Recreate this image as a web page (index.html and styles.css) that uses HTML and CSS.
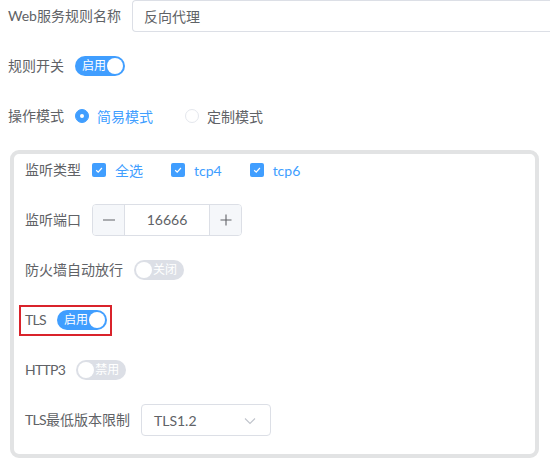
FILE: index.html
```html
<!DOCTYPE html>
<html lang="zh-CN">
<head>
<meta charset="utf-8">
<link rel="stylesheet" href="styles.css">
</head>
<body>
<div class="form">
  <div class="row">
    <span class="label">Web服务规则名称</span>
    <div class="input"><span>反向代理</span></div>
  </div>
  <div class="row">
    <span class="label">规则开关</span>
    <span class="switch on"><span class="sw-text">启用</span><span class="knob"></span></span>
  </div>
  <div class="row">
    <span class="label">操作模式</span>
    <span class="radio checked"><span class="dot"></span><span class="rtext">简易模式</span></span>
    <span class="radio"><span class="dot"></span><span class="rtext">定制模式</span></span>
  </div>
  <div class="card">
    <div class="row">
      <span class="label">监听类型</span>
      <span class="check"><span class="box"><svg width="10" height="10" viewBox="0 0 10 10"><path d="M2.2 5.2 L4.2 7.1 L7.9 3" fill="none" stroke="#fff" stroke-width="1.2"/></svg></span><span class="ctext">全选</span></span>
      <span class="check"><span class="box"><svg width="10" height="10" viewBox="0 0 10 10"><path d="M2.2 5.2 L4.2 7.1 L7.9 3" fill="none" stroke="#fff" stroke-width="1.2"/></svg></span><span class="ctext">tcp4</span></span>
      <span class="check"><span class="box"><svg width="10" height="10" viewBox="0 0 10 10"><path d="M2.2 5.2 L4.2 7.1 L7.9 3" fill="none" stroke="#fff" stroke-width="1.2"/></svg></span><span class="ctext">tcp6</span></span>
    </div>
    <div class="row">
      <span class="label">监听端口</span>
      <div class="number">
        <span class="nbtn minus"><svg width="14" height="14" viewBox="0 0 14 14"><path d="M1 7 H13" stroke="#606266" stroke-width="1.1"/></svg></span>
        <span class="nval">16666</span>
        <span class="nbtn plus"><svg width="14" height="14" viewBox="0 0 14 14"><path d="M1.5 7 H12.5 M7 1.5 V12.5" stroke="#606266" stroke-width="1.1"/></svg></span>
      </div>
    </div>
    <div class="row">
      <span class="label">防火墙自动放行</span>
      <span class="switch off"><span class="knob"></span><span class="sw-text">关闭</span></span>
    </div>
    <div class="row">
      <div class="highlight">
        <span class="label"><span class="latin">TLS</span></span>
        <span class="switch on"><span class="sw-text">启用</span><span class="knob"></span></span>
      </div>
    </div>
    <div class="row">
      <span class="label"><span class="latin">HTTP3</span></span>
      <span class="switch off"><span class="knob"></span><span class="sw-text">禁用</span></span>
    </div>
    <div class="row">
      <span class="label"><span class="latin">TLS</span>最低版本限制</span>
      <div class="select">
        <span>TLS1.2</span>
        <svg class="chev" width="12" height="8" viewBox="0 0 12 8"><path d="M1 1.5 L6 6.5 L11 1.5" fill="none" stroke="#c0c4cc" stroke-width="1.1"/></svg>
      </div>
    </div>
  </div>
</div>
</body>
</html>
```
FILE: styles.css
```css
* { box-sizing: border-box; }
html, body { margin: 0; padding: 0; background: #fff; }
body {
  font-family: Lato, "Noto Sans CJK SC", sans-serif;
  font-size: 14px;
  color: #606266;
  width: 550px;
  height: 468px;
  overflow: hidden;
}
.form { padding: 0 0 0 8px; }
.row {
  display: flex;
  align-items: center;
  height: 32px;
  margin-bottom: 18px;
  white-space: nowrap;
}
.label { padding-right: 11px; line-height: 32px; }
.latin { letter-spacing: -0.7px; }
.input {
  flex: 1;
  height: 32px;
  border: 1px solid #dcdfe6;
  border-right: none;
  border-radius: 4px 0 0 4px;
  padding-left: 11px;
  display: flex;
  align-items: center;
}
.switch {
  position: relative;
  display: inline-flex;
  align-items: center;
  width: 50px;
  height: 20px;
  border-radius: 10px;
  font-size: 12px;
  color: #fff;
  padding: 0 2px;
}
.switch.on { background: #409eff; justify-content: space-between; padding-left: 7px; }
.switch.off { background: #dcdfe6; justify-content: space-between; padding-right: 7px; }
.switch .knob {
  width: 16px; height: 16px; border-radius: 50%; background: #fff;
}
.sw-text { line-height: 20px; }
.radio { display: inline-flex; align-items: center; margin-right: 32px; }
.radio .dot {
  width: 14px; height: 14px; border-radius: 50%;
  border: 1px solid #e4e7ed; background: #fff; margin-right: 8px;
  display: inline-flex; align-items: center; justify-content: center;
}
.radio.checked .dot { background: #409eff; border-color: #409eff; }
.radio.checked .dot::after {
  content: ""; width: 4px; height: 4px; border-radius: 50%; background: #fff;
}
.radio.checked .rtext { color: #409eff; }
.card {
  margin-left: 2px;
  width: 529px;
  border: 4px solid #e2e3e4;
  border-radius: 9px;
  padding: 0 0 0 11px;
}
.check { display: inline-flex; align-items: center; margin-right: 28px; }
.check .box {
  width: 14px; height: 14px; border-radius: 2px; background: #409eff;
  display: inline-flex; align-items: center; justify-content: center; margin-right: 9px;
}
.check .ctext { color: #409eff; }
.number {
  display: flex;
  width: 150px;
  height: 32px;
  border: 1px solid #dcdfe6;
  border-radius: 4px;
  overflow: hidden;
}
.nbtn {
  width: 32px; background: #f5f7fa;
  display: flex; align-items: center; justify-content: center;
}
.minus { border-right: 1px solid #dcdfe6; }
.plus { border-left: 1px solid #dcdfe6; }
.nval { flex: 1; text-align: center; line-height: 30px; }
.highlight {
  display: flex;
  align-items: center;
  margin-left: -6px;
  padding: 0 3px 0 4px;
  height: 31px;
  border: 2px solid #d9232b;
}
.select {
  width: 130px; height: 32px;
  border: 1px solid #dcdfe6; border-radius: 4px;
  display: flex; align-items: center; justify-content: space-between;
  padding: 0 14px 0 12px;
}
.chev { margin-top: 1px; }
```
